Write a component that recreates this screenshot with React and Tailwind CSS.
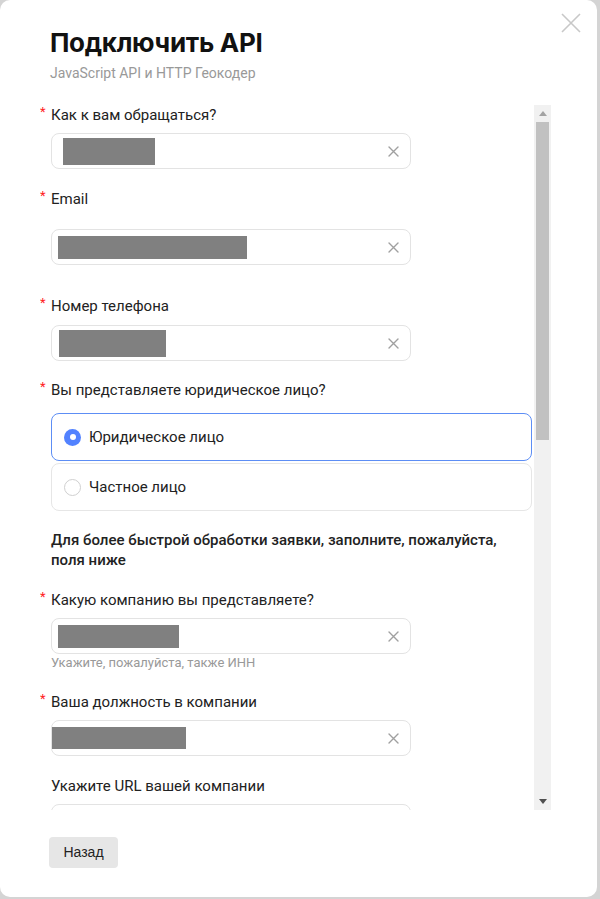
import React from "react";

const font = { fontFamily: "Roboto, 'Noto Sans', sans-serif" };

function Label({ children, required = true }) {
  return (
    <div className="relative flex h-[20px] items-center pl-[11px] text-[15px] leading-[20px] text-[#222]">
      {required && (
        <span className="absolute left-0 top-[-3px] text-[13px] text-[#ff2222]">*</span>
      )}
      {children}
    </div>
  );
}

function ClearIcon() {
  return (
    <svg width="11" height="11" viewBox="0 0 11 11" className="shrink-0">
      <path d="M1 1L10 10M10 1L1 10" stroke="#a0a0a0" strokeWidth="1.4" strokeLinecap="round" />
    </svg>
  );
}

function Input({ redact, mt }) {
  return (
    <div className={`ml-[11px] flex h-[36px] w-[360px] items-center rounded-[8px] border border-[#e3e3e3] pr-[11px] ${mt}`}>
      <div className="flex-1">
        {redact && (
          <div
            className="bg-[#808080]"
            style={{ marginLeft: redact[0], width: redact[1], height: redact[2] }}
          />
        )}
      </div>
      <ClearIcon />
    </div>
  );
}

function Radio({ checked, children, mt }) {
  return (
    <div
      className={`ml-[11px] flex h-[48px] w-[481px] items-center gap-[8px] rounded-[8px] border pl-[12px] text-[15px] text-[#222] ${
        checked ? "border-[#5d8ef5]" : "border-[#e6e6e6]"
      } ${mt}`}
    >
      {checked ? (
        <span className="flex h-[17px] w-[17px] items-center justify-center rounded-full bg-[#5282ff]">
          <span className="h-[6px] w-[6px] rounded-full bg-white" />
        </span>
      ) : (
        <span className="h-[17px] w-[17px] rounded-full border border-[#d0d0d0] bg-white" />
      )}
      <span>{children}</span>
    </div>
  );
}

export default function App() {
  return (
    <div className="min-h-screen bg-[#d4d4d4]" style={font}>
      <div className="relative flex h-[897px] w-[597px] flex-col rounded-[10px] bg-white">
        <button className="absolute right-[16px] top-[13px] h-[20px] w-[20px]">
          <svg width="20" height="20" viewBox="0 0 20 20">
            <path d="M1 1L19 19M19 1L1 19" stroke="#c8c8c8" strokeWidth="1.6" />
          </svg>
        </button>

        <div className="px-[50px] pt-[27px]">
          <h1
            className="text-[26px] font-bold leading-[32px] tracking-[-0.3px] text-[#111]"
            style={{ fontFamily: "Inter, Roboto, sans-serif" }}
          >
            Подключить API
          </h1>
          <p className="mt-[5px] text-[14px] leading-[18px] text-[#999]">
            JavaScript API и HTTP Геокодер
          </p>
        </div>

        <div className="mt-[23px] flex h-[705px] pl-[40px]">
          <div className="w-[494px] overflow-hidden">
            <Label>Как к вам обращаться?</Label>
            <Input redact={[11, 92, 27]} mt="mt-[8px]" />

            <div className="mt-[20px]">
              <Label>Email</Label>
            </div>
            <Input redact={[6, 189, 23]} mt="mt-[20px]" />

            <div className="mt-[31px]">
              <Label>Номер телефона</Label>
            </div>
            <Input redact={[7, 107, 27]} mt="mt-[9px]" />

            <div className="mt-[19px]">
              <Label>Вы представляете юридическое лицо?</Label>
            </div>
            <Radio checked mt="mt-[13px]">Юридическое лицо</Radio>
            <Radio mt="mt-[2px]">Частное лицо</Radio>

            <p className="mt-[19px] pl-[11px] text-[15px] font-medium leading-[20px] text-[#222]">
              Для более быстрой обработки заявки, заполните, пожалуйста, поля ниже
            </p>

            <div className="mt-[20px]">
              <Label>Какую компанию вы представляете?</Label>
            </div>
            <Input redact={[6, 121, 23]} mt="mt-[8px]" />
            <div className="mt-[2px] pl-[11px] text-[13px] leading-[14px] text-[#999]">
              Укажите, пожалуйста, также ИНН
            </div>

            <div className="mt-[22px]">
              <Label>Ваша должность в компании</Label>
            </div>
            <Input redact={[0, 134, 22]} mt="mt-[8px]" />

            <div className="mt-[20px]">
              <Label required={false}>Укажите URL вашей компании</Label>
            </div>
            <Input mt="mt-[8px]" />
          </div>

          <div className="flex w-[17px] flex-col bg-[#f1f1f1]">
            <div className="flex h-[17px] items-center justify-center">
              <svg width="8" height="5" viewBox="0 0 8 5">
                <path d="M0 5L4 0L8 5Z" fill="#a3a3a3" />
              </svg>
            </div>
            <div className="mx-[2px] h-[318px] bg-[#c1c1c1]" />
            <div className="flex-1" />
            <div className="flex h-[17px] items-center justify-center">
              <svg width="8" height="5" viewBox="0 0 8 5">
                <path d="M0 0L8 0L4 5Z" fill="#505050" />
              </svg>
            </div>
          </div>
        </div>

        <div className="px-[49px] pt-[27px]">
          <button
            className="h-[31px] w-[69px] rounded-[4px] bg-[#e6e6e6] text-[14px] text-[#222]"
            style={{ fontFamily: "'Liberation Sans', Arial, sans-serif" }}
          >
            Назад
          </button>
        </div>
      </div>
    </div>
  );
}
